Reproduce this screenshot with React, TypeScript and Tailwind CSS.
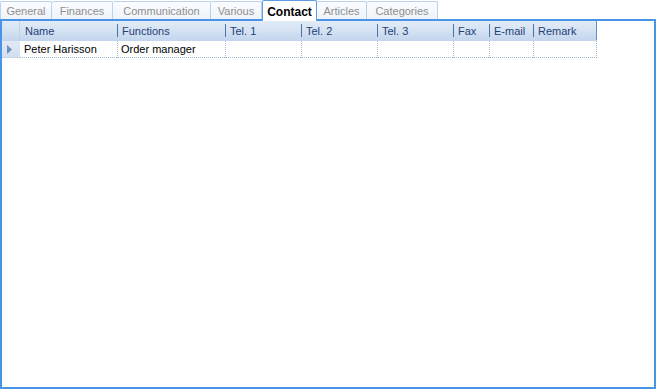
const tabs = [
  { label: "General", w: "w-[52px]" },
  { label: "Finances", w: "w-[61px]" },
  { label: "Communication", w: "w-[98px]" },
  { label: "Various", w: "w-[51px]" },
  { label: "Contact", w: "w-[55px]", active: true },
  { label: "Articles", w: "w-[50px]" },
  { label: "Categories", w: "w-[71px]" },
];

const columns = [
  { label: "Name", w: "w-[97px]" },
  { label: "Functions", w: "w-[108px]" },
  { label: "Tel. 1", w: "w-[76px]" },
  { label: "Tel. 2", w: "w-[76px]" },
  { label: "Tel. 3", w: "w-[76px]" },
  { label: "Fax", w: "w-[36px]" },
  { label: "E-mail", w: "w-[44px]" },
  { label: "Remark", w: "w-[64px]" },
];

const row = ["Peter Harisson", "Order manager", "", "", "", "", "", ""];

function App() {
  return (
    <div className="w-[656px] h-[389px] bg-white flex flex-col text-[11px] font-['Liberation_Sans',Arial,sans-serif] overflow-hidden">
      {/* tabs */}
      <div className="flex items-end h-[19px] shrink-0 relative z-10">
        {tabs.map((t) =>
          t.active ? (
            <div
              key={t.label}
              className={`${t.w} h-[21px] -mb-[2px] bg-white border border-b-0 border-[#5d9de6] rounded-t-[2px] flex items-start justify-center pt-[2px] font-bold text-black text-[12px]`}
            >
              {t.label}
            </div>
          ) : (
            <div
              key={t.label}
              className={`${t.w} h-[18px] bg-gradient-to-b from-[#fbfcfe] to-[#eef3f9] border border-b-0 border-l-0 first:border-l border-[#b9d2ef] rounded-t-[2px] flex items-center justify-center text-[#8f8f8f] pt-[1px]`}
            >
              {t.label}
            </div>
          )
        )}
      </div>
      {/* panel */}
      <div className="flex-1 border-2 border-[#4a94e6] flex flex-col">
        {/* header */}
        <div className="flex h-[20px] bg-gradient-to-b from-[#e3ecf7] via-[#d5e2f2] to-[#c4d6ee] border-b border-[#c4d6ee] w-[595px]">
          <div className="w-[18px] shrink-0 border-r border-[#c1d3ea]" />
          {columns.map((c, i) => (
            <div key={c.label} className={`${c.w} shrink-0 flex items-center relative ${i === columns.length - 1 ? "border-r border-[#5b8fd4]" : ""}`}>
              {i > 0 && <div className="w-px h-[13px] bg-[#4f74aa]" />}
              <span className={`${i > 0 ? "pl-[4px]" : "pl-[5px]"} text-[#1e3f78] pt-[2px]`}>{c.label}</span>
            </div>
          ))}
        </div>
        {/* row */}
        <div className="flex h-[17px] w-[595px]">
          <div className="w-[18px] shrink-0 bg-gradient-to-b from-[#e1e9f5] to-[#d3dff0] border-b border-[#c6d6ec] flex items-center pl-[5px]">
            <svg width="5" height="9" viewBox="0 0 5 9">
              <path d="M0 0 L5 4.5 L0 9 Z" fill="#6f90bf" />
            </svg>
          </div>
          {columns.map((c, i) => (
            <div
              key={c.label}
              className={`${c.w} shrink-0 flex items-center ${i === 0 ? "pl-[4px]" : "pl-[3px]"} pt-[1px] border-b border-dotted border-[#9db6d8] ${i > 0 ? "border-l" : ""} ${i === columns.length - 1 ? "border-r" : ""} text-black`}
            >
              {row[i]}
            </div>
          ))}
        </div>
      </div>
    </div>
  );
}

export default App;
